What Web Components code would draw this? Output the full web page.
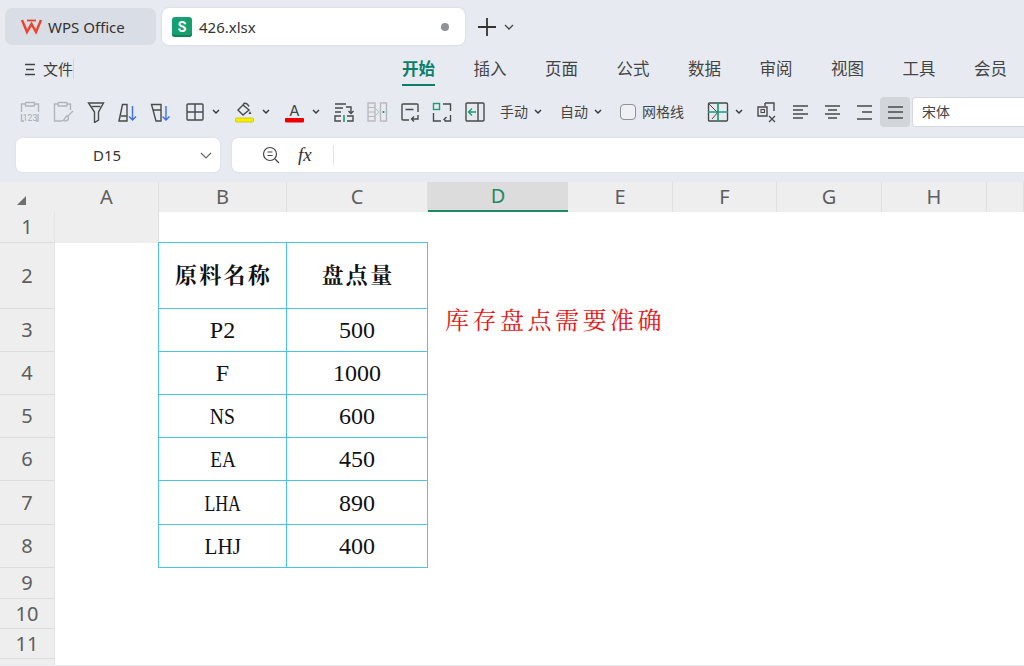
<!DOCTYPE html>
<html lang="zh">
<head>
<meta charset="utf-8">
<title>426.xlsx</title>
<style>
    html,body{ margin:0; width:1024px; height:666px; overflow:hidden; background:#e7ebf1 }
</style>
</head>
<body>
<wps-tabbar></wps-tabbar>
<wps-ribbon></wps-ribbon>
<wps-toolbar></wps-toolbar>
<wps-formula></wps-formula>
<wps-sheet></wps-sheet>
<script>
const UI_FONT = `"Noto Sans","Noto Sans CJK SC",sans-serif`;
const CHEVRON = `<svg width="8" height="6" viewBox="0 0 8 6" fill="none" stroke="#3c3c3c" stroke-width="1.5"><path d="M1 1l3 3 3-3"/></svg>`;
const svg = (body, w = 22) => `<svg width="${w}" height="22" viewBox="0 0 ${w} 22" fill="none" stroke="#4a4a4a" stroke-width="1.4">${body}</svg>`;
const ICONS = {
    paste: svg(`<g stroke="#b2b4b8"><path d="M6 3H2.5v8M16 3h3.500v8M2.500 13v7H5M19 13v7h-2"/><rect x="6.500" y="1.500" width="9" height="3.500" rx=".5"/></g><text x="11" y="20" text-anchor="middle" font-family="Roboto,sans-serif" font-size="8.500" fill="#a6a8ac" stroke="none">123</text>`),
    painter: svg(`<g stroke="#b2b4b8"><path d="M6 3H2.500v17H10M15 3h3.500v6"/><rect x="6" y="1.500" width="9" height="3.500" rx=".5"/><path d="M21 10l-6 6M15 15c-2 .5-1.500 3-4 4.500 3 1 6 0 5.500-3z"/></g>`),
    filter: svg(`<path d="M3.500 2h15l-5 9v8l-4 2.500V11z"/><path d="M6.500 5.500h9" />`),
    sortUp: svg(`<path d="M2 20L5.500 3.500H10V20zM4 15h6"/><path stroke="#3f6fe0" d="M15.500 5v14M12 15.500l3.500 3.500 3.500-3.500"/>`),
    sortDown: svg(`<path d="M1.500 3.500H11V20H6zM3 9h8"/><path stroke="#3f6fe0" d="M16 5v14M12.500 15.500l3.500 3.500 3.500-3.500"/>`),
    border: svg(`<rect x="3" y="3" width="16" height="16" rx="1"/><path d="M11 3v16M3 11h16"/>`),
    fill: svg(`<path d="M9 4l-5 5 5 5 6-5zM9 4l1-1.500c2-1 4 1 5 3"/><path d="M16 10l1.500 3h-3z" fill="#4a4a4a" stroke="none"/><rect x="1.500" y="17" width="18" height="4" rx="1" fill="#f6ee00" stroke="#c9c200" stroke-width=".8"/>`),
    color: svg(`<text x="10.500" y="15" text-anchor="middle" font-family="Inter,sans-serif" font-size="15" fill="#444" stroke="none">A</text><rect x="1" y="17" width="19" height="4.500" rx="1" fill="#ee0000" stroke="none"/>`),
    wrapCols: svg(`<path d="M2 3h11M2 7h8M2 11h6M13 6h5v6M15.500 10l2.500 2.500 2.500-2.500M8 15H2v5h6M14 15h6v5h-6"/><path stroke="#1f9a74" stroke-width="1.600" d="M11 14v7"/>`),
    splitCols: svg(`<g stroke="#b6b8bc"><rect x="2" y="2" width="7" height="18"/><rect x="14.500" y="2" width="6" height="18"/><path d="M2 6.500h7M2 11h7M2 15.500h7M10 8l3 3-3 3" stroke-width="1"/></g><path stroke="#1f9a74" stroke-width="1.800" d="M17.500 10v2"/>`),
    rowWrap: svg(`<path d="M10 19H4q-1 0-1-1V4q0-1 1-1h14q1 0 1 1v7M6.500 8.500h8M19 14v4h-6M15 15.500L12.500 18l2.500 2.500"/>`),
    cellWrap: svg(`<rect x="2.500" y="2.500" width="6" height="6" stroke="#1f9a74"/><path d="M12 3h7.500v7M2.500 12v8H10M19.500 14v6h-6M15.500 16l-2.500 2.500 2.500 2"/>`),
    indent: svg(`<rect x="2" y="2" width="18" height="18" rx="1"/><path d="M14 2v18"/><path stroke="#1f9a74" d="M12 11H5M8 7.500L4.500 11 8 14.500"/>`),
    merge: svg(`<rect x="1.500" y="2" width="19" height="18" rx="1"/><path d="M2 3l8 8M11 11l-6 7" stroke-width="1"/><path stroke="#1f9a74" stroke-width="1.700" d="M11 1v20M1 11h20"/>`),
    clear: svg(`<path d="M9 2h9v8M9 2v3M2 6h9v9H2zM13 15l6 6M19 15l-6 6"/><rect x="5" y="8.500" width="3.500" height="3" stroke-width="1.100"/>`),
    alignLeft: svg(`<path d="M4 5h15M4 9h10M4 13h15M4 17h10"/>`),
    alignCenter: svg(`<path d="M4 5h15M7 9h9M4 13h15M7 17h9"/>`),
    alignRight: svg(`<path d="M4 5h15M9 11h10M4 18h15"/>`),
    alignFill: svg(`<path d="M4 6h15M4 11h15M4 17h15"/>`)
};

customElements.define('wps-tabbar', class extends HTMLElement {
    constructor() {
        super();
        this.attachShadow({ mode: 'open' })
            .innerHTML = `
            <style>
                :host{ display:flex; align-items:center; height:37px; padding:8px 0 0 5px;
                    font:15px/20px ${UI_FONT}; color:#333 }
                .tab{ display:flex; align-items:center; height:37px; box-sizing:border-box; border-radius:7px }
                #home{ width:151px; background:#d9dde5; padding-left:16px; gap:6px; margin-right:6px }
                #file{ width:303px; background:#fff; padding-left:10px; gap:7px; box-shadow:0 0 2px #c3c8d0 }
                #s{ width:20px; height:20px; border-radius:3px; background:#17a06f; color:#fff;
                    font:bold 14px/20px Roboto,sans-serif; text-align:center; box-shadow:inset 0 -2px 0 #0f8459 }
                #dot{ width:8px; height:8px; border-radius:50%; background:#909296; margin-left:auto; margin-right:16px }
                #plus{ margin-left:12px; margin-right:7px; display:flex }
            </style>
            <div class="tab" id="home">
                <svg width="21" height="18" viewBox="0 0 21 18" fill="none" stroke="#f0402a" stroke-width="2.400"><path d="M1 2l5 12 4.500-8 4.500 8 5-12"/><path d="M6 2.500h9" stroke-width="1.800"/></svg>
                <span>WPS Office</span>
            </div>
            <div class="tab" id="file">
                <div id="s">S</div><span>426.xlsx</span><div id="dot"></div>
            </div>
            <div id="plus"><svg width="20" height="20" viewBox="0 0 20 20" stroke="#333" stroke-width="1.800"><path d="M10 1v18M1 10h18"/></svg></div>
            <svg width="10" height="6" viewBox="0 0 10 6" fill="none" stroke="#444" stroke-width="1.300"><path d="M1 1l4 4 4-4"/></svg>`;
    }
});

customElements.define('wps-ribbon', class extends HTMLElement {
    constructor() {
        super();
        const labels = ['开始', '插入', '页面', '公式', '数据', '审阅', '视图', '工具', '会员'];
        this.attachShadow({ mode: 'open' })
            .innerHTML = `
            <style>
                :host{ display:flex; align-items:flex-start; height:51px; box-sizing:border-box; padding:14px 0 0 24px;
                    font:15px/20px ${UI_FONT}; color:#3d3d3d; white-space:nowrap }
                #file{ display:flex; align-items:center; gap:7px; width:67px; height:20px; border-right:1px solid #d2d6dc; margin-right:328px }
                .tab{ flex:none; width:33px; margin-right:38.500px; font-size:16.500px; height:27px; box-sizing:border-box; border-bottom:2px solid transparent; color:#444 }
                .on{ color:#0b7f68; font-weight:bold; border-bottom-color:#0b7f68 }
            </style>
            <div id="file">
                <svg width="12" height="13" viewBox="0 0 12 13" stroke="#444" stroke-width="1.300"><path d="M1 1.500h10M2 6.500h8M1 11.500h10"/></svg>
                <span>文件</span>
            </div>
            ${labels.map((label, i) => `<div class="tab ${i ? '' : 'on'}">${label}</div>`).join('')}`;
    }
});

customElements.define('wps-tool', class extends HTMLElement {
    constructor() {
        super();
        this.attachShadow({ mode: 'open' })
            .innerHTML = `
            <style>
                :host{ display:flex; flex:none; align-items:center; justify-content:center; gap:6px; height:30px;
                    box-sizing:border-box; border-radius:4px }
                :host([on]){ background:#d2d6db }
            </style>
            <slot></slot>`;
    }
    connectedCallback() {
        this.style.width = `${this.getAttribute('w') || 33}px`;
    }
});

customElements.define('wps-toolbar', class extends HTMLElement {
    constructor() {
        super();
        const tool = (name, w, chev, on) => `<wps-tool w="${w}" ${on ? 'on' : ''}>${ICONS[name]}${chev ? CHEVRON : ''}</wps-tool>`;
        const menu = (label, w) => `<wps-tool w="${w}"><span>${label}</span>${CHEVRON}</wps-tool>`;
        this.attachShadow({ mode: 'open' })
            .innerHTML = `
            <style>
                :host{ display:flex; align-items:center; height:30px; padding:0 0 0 13px; margin-top:1px; white-space:nowrap;
                    font:14px/20px ${UI_FONT}; color:#444 }
                #check{ width:16px; height:16px; box-sizing:border-box; border:1.500px solid #8d9095; border-radius:4px; background:#eef0f4; margin:0 6px 0 9px; flex:none }
                #font{ flex:1; height:30px; box-sizing:border-box; background:#fff; border:1px solid #d4d8de; border-right:0;
                    border-radius:4px 0 0 4px; padding:4px 9px; margin-left:2px }
            </style>
            ${tool('paste', 33)}${tool('painter', 33)}${tool('filter', 33)}${tool('sortUp', 32)}${tool('sortDown', 33)}
            ${tool('border', 50, 1)}${tool('fill', 50, 1)}${tool('color', 50, 1)}
            ${tool('wrapCols', 33)}${tool('splitCols', 33)}${tool('rowWrap', 33)}${tool('cellWrap', 32)}${tool('indent', 33)}
            ${menu('手动', 60)}${menu('自动', 60)}
            <div id="check"></div><span>网格线</span>
            <wps-tool w="50" style="margin-left:16px">${ICONS.merge}${CHEVRON}</wps-tool>
            ${tool('clear', 33)}${tool('alignLeft', 33)}${tool('alignCenter', 32)}${tool('alignRight', 32)}${tool('alignFill', 30, 0, 1)}
            <div id="font">宋体</div>`;
    }
});

customElements.define('wps-formula', class extends HTMLElement {
    constructor() {
        super();
        this.attachShadow({ mode: 'open' })
            .innerHTML = `
            <style>
                :host{ display:flex; gap:12px; height:34px; padding:11px 0 10px 16px; font:15px/20px ${UI_FONT}; color:#333 }
                .box{ display:flex; align-items:center; background:#fff; box-shadow:0 0 1.500px #c6cad1; box-sizing:border-box }
                #name{ width:204px; border-radius:6px; position:relative; padding-left:77px }
                #name svg{ margin-left:auto; margin-right:8px }
                #bar{ flex:1; border-radius:6px 0 0 6px; padding-left:30px; gap:18px }
                #fx{ font:italic 19px/20px "Liberation Serif",serif; color:#333; width:19px }
                #sep{ width:1px; height:20px; background:#dfe2e7; margin-left:-2px }
            </style>
            <div class="box" id="name"><span>D15</span>
                <svg width="12" height="7" viewBox="0 0 12 7" fill="none" stroke="#666" stroke-width="1.200"><path d="M1 1l5 5 5-5"/></svg></div>
            <div class="box" id="bar">
                <svg width="18" height="18" viewBox="0 0 18 18" fill="none" stroke="#444" stroke-width="1.200"><circle cx="8" cy="8" r="6.500"/><path d="M5.500 6h5M5.500 9.500h5M13 13l4 4"/></svg>
                <span id="fx">fx</span><div id="sep"></div>
            </div>`;
    }
});

customElements.define('wps-cell', class extends HTMLElement {
    constructor() {
        super();
        this.attachShadow({ mode: 'open' })
            .innerHTML = `
            <style>
                :host{ display:flex; align-items:center; justify-content:center; box-sizing:border-box; margin:-1px 0 0 -1px;
                    border:1px solid #4cc2ee; background:#fff; color:#111;
                    font:24px/28px "Liberation Serif","Noto Serif CJK SC","Noto Sans CJK SC",serif }
                :host([head]){ font-weight:bold; font-size:22px; letter-spacing:2.300px; padding-left:2px }
                span{ display:inline-block }
            </style>
            <span><slot></slot></span>`;
    }
    connectedCallback() {
        const squeeze = this.getAttribute('squeeze');
        if (squeeze) this.shadowRoot.querySelector('span').style.transform = `scaleX(${squeeze})`;
    }
});

customElements.define('wps-sheet', class extends HTMLElement {
    constructor() {
        super();
        const cols = 'ABCDEFGHI'.split('');
        const rows = [31, 66, 43, 43, 43, 43, 44, 43, 31, 30, 30, 30];
        const data = [['P2', '500', 1], ['F', '1000', 1], ['NS', '600', .82], ['EA', '450', .8], ['LHA', '890', .74], ['LHJ', '400', .88]];
        this.attachShadow({ mode: 'open' })
            .innerHTML = `
            <style>
                :host{ display:grid; height:483px; overflow:hidden; background:#fff; margin-top:0;
                    grid-template-columns:55px 104px 128px 141px 140px 105px 104px 105px 105px 37px;
                    grid-template-rows:30px ${rows.map(h => h + 'px').join(' ')};
                    font:20px/24px "Noto Sans",sans-serif; color:#5e5e5e }
                .hd{ display:flex; align-items:center; justify-content:center; background:#eeeeee; box-sizing:border-box }
                .col{ border-right:1px solid #e0e0e0 }
                .row{ border-bottom:1px solid #dcdcdc; grid-column:1; border-right:1px solid #e4e4e4 }
                .sel{ background:#dcdcdc; color:#1e8a64; border-bottom:2px solid #1e8a64; border-right:0 }
                #corner{ width:0; height:0; border-style:solid; border-width:0 0 9px 9px; border-color:transparent transparent #707070 transparent; margin:7px 0 0 -12px }
                #note{ grid-column:5; grid-row:4; align-self:start; margin:-5px 0 0 17px; white-space:nowrap; color:#f01010;
                    font:24px/30px "Noto Serif CJK SC","Noto Sans CJK SC",serif; letter-spacing:3.500px; width:0 }
                wps-cell.b{ grid-column:3 }
                wps-cell.c{ grid-column:4 }
            </style>
            <div class="hd"><div id="corner"></div></div>
            ${cols.map(c => `<div class="hd col ${c === 'D' ? 'sel' : ''}">${c === 'I' ? '' : c}</div>`).join('')}
            <div class="hd col"></div>
            ${rows.map((h, i) => `<div class="hd row" style="grid-row:${i + 2}">${i + 1}</div>`).join('')}
            <wps-cell class="b" head style="grid-row:3">原料名称</wps-cell>
            <wps-cell class="c" head style="grid-row:3">盘点量</wps-cell>
            ${data.map(([name, qty, squeeze], i) => `
                <wps-cell class="b" style="grid-row:${i + 4}" squeeze="${squeeze}">${name}</wps-cell>
                <wps-cell class="c" style="grid-row:${i + 4}">${qty}</wps-cell>`).join('')}
            <div id="note">库存盘点需要准确</div>`;
    }
});
</script>
</body>
</html>
